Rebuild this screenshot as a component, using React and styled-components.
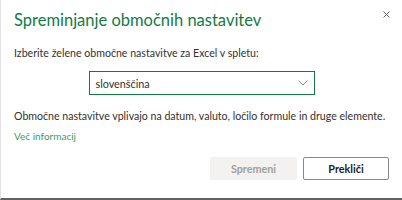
import React from "react";
import styled, { createGlobalStyle } from "styled-components";

const Global = createGlobalStyle`
  html, body { margin: 0; padding: 0; background: #ffffff; }
  body { font-family: Lato, "Open Sans", sans-serif; }
`;

const Dialog = styled.div`
  box-sizing: border-box;
  width: 402px;
  height: 200px;
  background: #ffffff;
  border-left: 1px solid #e1e1e1;
  border-bottom: 2px solid #626262;
  padding: 8px 13px 0 13px;
  display: flex;
  flex-direction: column;
`;

const Header = styled.div`
  display: flex;
  justify-content: space-between;
  align-items: flex-start;
`;

const Title = styled.h1`
  margin: 0;
  font-size: 16.5px;
  line-height: 24px;
  font-weight: 400;
  color: #107c41;
`;

const Close = styled.button`
  border: 0;
  background: transparent;
  padding: 0;
  margin: 1px -2px 0 0;
  width: 10px;
  height: 10px;
  display: flex;
  align-items: center;
  justify-content: center;
`;

const Text = styled.p`
  margin: ${(p) => p.$mt || 0}px 0 0 0;
  font-size: 10.6px;
  line-height: 16px;
  color: #323130;
  white-space: nowrap;
`;

const SelectRow = styled.div`
  display: flex;
  justify-content: center;
  margin-top: 10px;
`;

const Select = styled.div`
  box-sizing: border-box;
  width: 226px;
  height: 24px;
  border: 1.5px solid #107c41;
  display: flex;
  align-items: center;
  justify-content: space-between;
  padding: 0 6px 0 6px;
  font-size: 10.8px;
  color: #323130;
`;

const Link = styled.a`
  margin-top: 5px;
  font-size: 10px;
  font-weight: 400;
  line-height: 15px;
  color: #33a065;
  text-decoration: none;
  align-self: flex-start;
`;

const Footer = styled.div`
  display: flex;
  justify-content: flex-end;
  gap: 6px;
  margin-top: 13px;
`;

const Button = styled.button`
  box-sizing: border-box;
  width: ${(p) => (p.$primary ? 87 : 86)}px;
  height: 23px;
  border-radius: 2px;
  font-family: Lato, "Open Sans", sans-serif;
  font-size: 10.8px;
  font-weight: 700;
  padding: 0;
  background: ${(p) => (p.$primary ? "#f3f2f1" : "#ffffff")};
  color: ${(p) => (p.$primary ? "#a19f9d" : "#201f1e")};
  border: ${(p) => (p.$primary ? "1px solid #f3f2f1" : "1px solid #8a8886")};
`;

export default function App() {
  return (
    <>
      <Global />
      <Dialog>
        <Header>
          <Title>Spreminjanje območnih nastavitev</Title>
          <Close aria-label="Zapri">
            <svg width="7" height="7" viewBox="0 0 7 7">
              <path d="M0.5 0.5 L6.5 6.5 M6.5 0.5 L0.5 6.5" stroke="#605e5c" strokeWidth="1" fill="none" />
            </svg>
          </Close>
        </Header>
        <Text $mt={13}>Izberite želene območne nastavitve za Excel v spletu:</Text>
        <SelectRow>
          <Select>
            <span>slovenščina</span>
            <svg width="10" height="6" viewBox="0 0 10 6">
              <path d="M0.5 0.5 L5 5 L9.5 0.5" stroke="#8a8886" strokeWidth="1" fill="none" />
            </svg>
          </Select>
        </SelectRow>
        <Text $mt={13}>Območne nastavitve vplivajo na datum, valuto, ločilo formule in druge elemente.</Text>
        <Link href="#">Več informacij</Link>
        <Footer>
          <Button $primary disabled>Spremeni</Button>
          <Button>Prekliči</Button>
        </Footer>
      </Dialog>
    </>
  );
}
